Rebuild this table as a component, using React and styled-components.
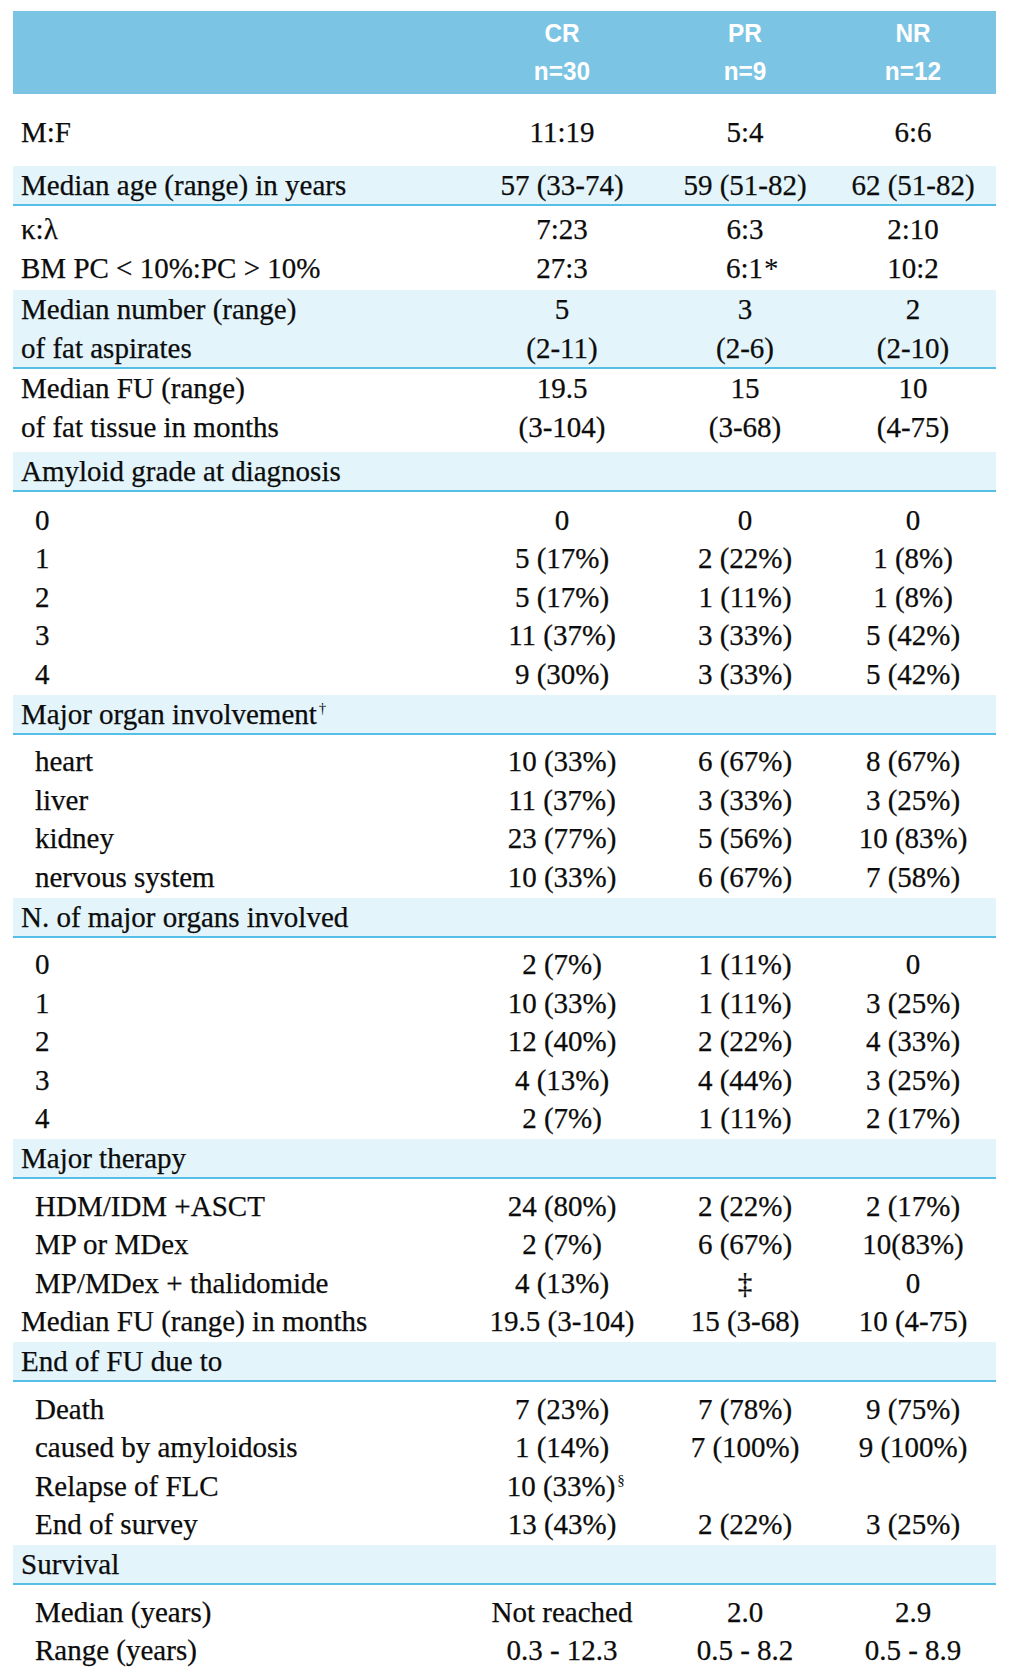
import React from "react";
import styled, { createGlobalStyle } from "styled-components";

const Global = createGlobalStyle`
  html, body { margin: 0; padding: 0; background: #ffffff; }
  body { font-family: "Liberation Serif", "Times New Roman", serif; color: #0c0c0c; }
`;

const COLS = "451px 196px 170px 166px";

const Table = styled.div`
  width: 983px;
  margin: 11px 0 0 13px;
`;

const HeadBand = styled.div`
  display: grid;
  grid-template-columns: ${COLS};
  background: #7cc4e4;
  padding: 4px 0 4px;
`;

const HeadCell = styled.div`
  color: #ffffff;
  font-family: "Liberation Sans", Arial, sans-serif;
  font-weight: 700;
  font-size: 26.5px;
  line-height: 37.5px;
  text-align: center;
  transform: scaleX(0.92);
`;

const Group = styled.div`
  padding: ${(p) => p.$pt || 0}px 0 ${(p) => p.$pb || 0}px;
  background: ${(p) => (p.$band ? "#e3f4fb" : "transparent")};
  border-bottom: ${(p) => (p.$line ? "2px solid #55bfe5" : "none")};
`;

const Row = styled.div`
  display: grid;
  grid-template-columns: ${COLS};
  font-size: 29px;
  line-height: ${(p) => p.$lh || 38.5}px;
  height: ${(p) => p.$lh || 38.5}px;
  white-space: nowrap;
  -webkit-text-stroke: 0.25px #0c0c0c;
`;

const Label = styled.div`
  padding-left: ${(p) => (p.$sub ? 22 : 8)}px;
`;

const Value = styled.div`
  text-align: center;
`;

const Mark = styled.span`
  display: inline-block;
  width: 0;
  overflow: visible;
  white-space: nowrap;
  font-size: ${(p) => (p.$small ? "15px" : "inherit")};
  vertical-align: ${(p) => (p.$small ? "top" : "baseline")};
  line-height: ${(p) => (p.$small ? "26px" : "inherit")};
  margin-left: ${(p) => (p.$small ? 2 : 1)}px;
  -webkit-text-stroke: 0;
`;

const renderText = (t) => {
  if (Array.isArray(t)) {
    return (
      <>
        {t[0]}
        <Mark $small={t[2] !== false}>{t[1]}</Mark>
      </>
    );
  }
  return t;
};

const groups = [
  { pt: 19, pb: 14.5, rows: [["M:F", "11:19", "5:4", "6:6"]] },
  {
    band: true,
    line: true,
    lh: 38,
    rows: [["Median age (range) in years", "57 (33-74)", "59 (51-82)", "62 (51-82)"]],
  },
  {
    pt: 4,
    pb: 3,
    rows: [
      ["κ:λ", "7:23", "6:3", "2:10"],
      ["BM PC < 10%:PC > 10%", "27:3", ["6:1", "*", false], "10:2"],
    ],
  },
  {
    band: true,
    line: true,
    rows: [
      ["Median number (range)", "5", "3", "2"],
      ["of fat aspirates", "(2-11)", "(2-6)", "(2-10)"],
    ],
  },
  {
    pt: 0,
    pb: 6,
    rows: [
      ["Median FU (range)", "19.5", "15", "10"],
      ["of fat tissue in months", "(3-104)", "(3-68)", "(4-75)"],
    ],
  },
  { band: true, line: true, lh: 38, rows: [["Amyloid grade at diagnosis"]] },
  {
    pt: 8.5,
    pb: 1.5,
    sub: true,
    rows: [
      ["0", "0", "0", "0"],
      ["1", "5 (17%)", "2 (22%)", "1 (8%)"],
      ["2", "5 (17%)", "1 (11%)", "1 (8%)"],
      ["3", "11 (37%)", "3 (33%)", "5 (42%)"],
      ["4", "9 (30%)", "3 (33%)", "5 (42%)"],
    ],
  },
  { band: true, line: true, lh: 38, rows: [[["Major organ involvement", "†"]]] },
  {
    pt: 7.5,
    pb: 1.5,
    sub: true,
    rows: [
      ["heart", "10 (33%)", "6 (67%)", "8 (67%)"],
      ["liver", "11 (37%)", "3 (33%)", "3 (25%)"],
      ["kidney", "23 (77%)", "5 (56%)", "10 (83%)"],
      ["nervous system", "10 (33%)", "6 (67%)", "7 (58%)"],
    ],
  },
  { band: true, line: true, lh: 38, rows: [["N. of major organs involved"]] },
  {
    pt: 7.5,
    pb: 1.5,
    sub: true,
    rows: [
      ["0", "2 (7%)", "1 (11%)", "0"],
      ["1", "10 (33%)", "1 (11%)", "3 (25%)"],
      ["2", "12 (40%)", "2 (22%)", "4 (33%)"],
      ["3", "4 (13%)", "4 (44%)", "3 (25%)"],
      ["4", "2 (7%)", "1 (11%)", "2 (17%)"],
    ],
  },
  { band: true, line: true, lh: 38, rows: [["Major therapy"]] },
  {
    pt: 7.5,
    pb: 1.5,
    sub: true,
    rows: [
      ["HDM/IDM +ASCT", "24 (80%)", "2 (22%)", "2 (17%)"],
      ["MP or MDex", "2 (7%)", "6 (67%)", "10(83%)"],
      ["MP/MDex + thalidomide", "4 (13%)", "‡", "0"],
      { main: true, cells: ["Median FU (range) in months", "19.5 (3-104)", "15 (3-68)", "10 (4-75)"] },
    ],
  },
  { band: true, line: true, lh: 38, rows: [["End of FU due to"]] },
  {
    pt: 7.5,
    pb: 1.5,
    sub: true,
    rows: [
      ["Death", "7 (23%)", "7 (78%)", "9 (75%)"],
      ["caused by amyloidosis", "1 (14%)", "7 (100%)", "9 (100%)"],
      ["Relapse of FLC", ["10 (33%)", "§"], "", ""],
      ["End of survey", "13 (43%)", "2 (22%)", "3 (25%)"],
    ],
  },
  { band: true, line: true, lh: 38, rows: [["Survival"]] },
  {
    pt: 7.5,
    pb: 0,
    sub: true,
    rows: [
      ["Median (years)", "Not reached", "2.0", "2.9"],
      ["Range (years)", "0.3 - 12.3", "0.5 - 8.2", "0.5 - 8.9"],
    ],
  },
];

export default function App() {
  return (
    <>
      <Global />
      <Table>
        <HeadBand>
          <div />
          <HeadCell>CR<br />n=30</HeadCell>
          <HeadCell>PR<br />n=9</HeadCell>
          <HeadCell>NR<br />n=12</HeadCell>
        </HeadBand>
        {groups.map((g, gi) => (
          <Group key={gi} $band={g.band} $line={g.line} $pt={g.pt} $pb={g.pb}>
            {g.rows.map((r, ri) => {
              const cells = Array.isArray(r) ? r : r.cells;
              const sub = g.sub && !(r && r.main);
              return (
                <Row key={ri} $lh={g.lh}>
                  <Label $sub={sub}>{renderText(cells[0])}</Label>
                  {cells.slice(1).map((c, ci) => (
                    <Value key={ci}>{renderText(c)}</Value>
                  ))}
                </Row>
              );
            })}
          </Group>
        ))}
      </Table>
    </>
  );
}
